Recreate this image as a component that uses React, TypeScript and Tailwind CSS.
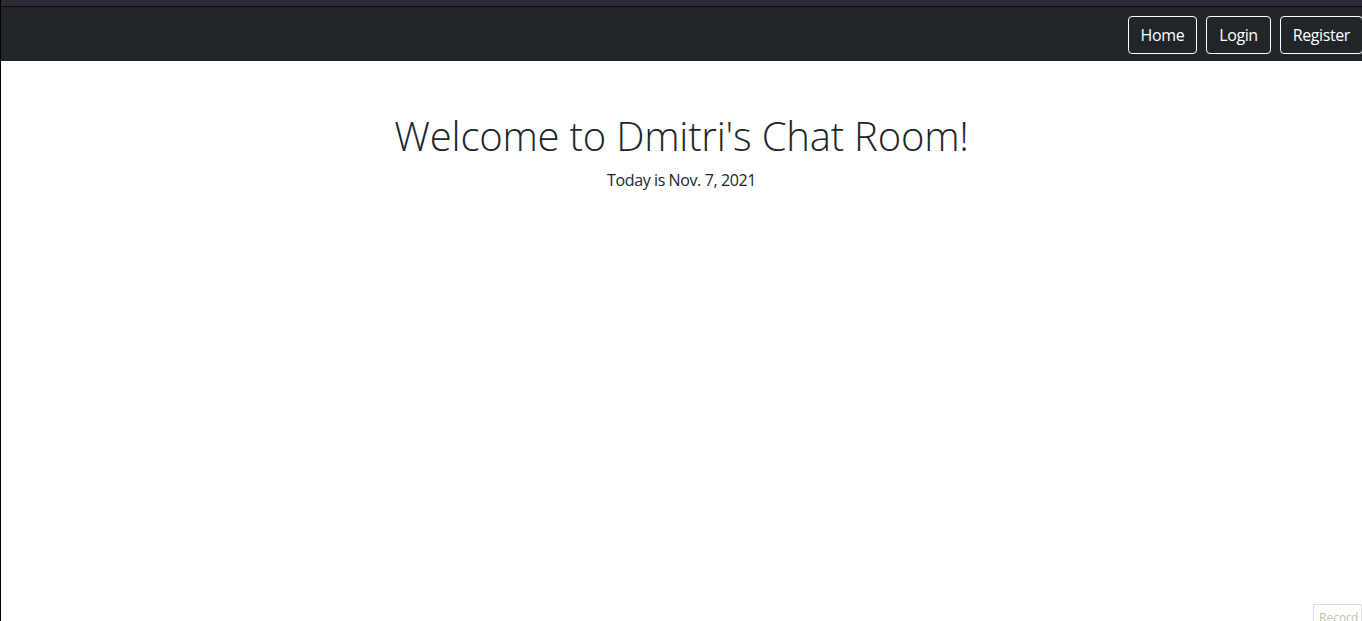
export default function App() {
  const links = ['Home', 'Login', 'Register'];

  return (
    <div className="relative min-h-screen overflow-hidden border-l border-black bg-white font-['Open_Sans',sans-serif] text-[#212529]">
      <div className="h-[6px] bg-[#2b2a33]" />
      <div className="h-px bg-[#0c0c0d]" />
      <nav className="-mr-px flex h-[54px] items-center justify-end gap-[9px] bg-[#212529] pt-px">
        {links.map(label => (
          <button
            key={label}
            className="h-[38px] rounded-[4px] border border-white px-3 text-base tracking-[-0.4px] text-white"
          >
            {label}
          </button>
        ))}
      </nav>

      <main className="pt-[51px] text-center">
        <h1 className="mb-2 text-[40px] font-light leading-[48px] tracking-[-0.2px]">Welcome to Dmitri's Chat Room!</h1>
        <p className="text-base leading-6 tracking-[-0.4px]">Today is Nov. 7, 2021</p>
      </main>

      <button className="fixed bottom-0 right-0 h-[17px] w-[49px] overflow-hidden border border-b-0 border-[#dddddd] bg-white pl-[5px] pt-[7px] text-left text-[12px] leading-none text-[#c8bfa8]">
        Record
      </button>
    </div>
  );
}
